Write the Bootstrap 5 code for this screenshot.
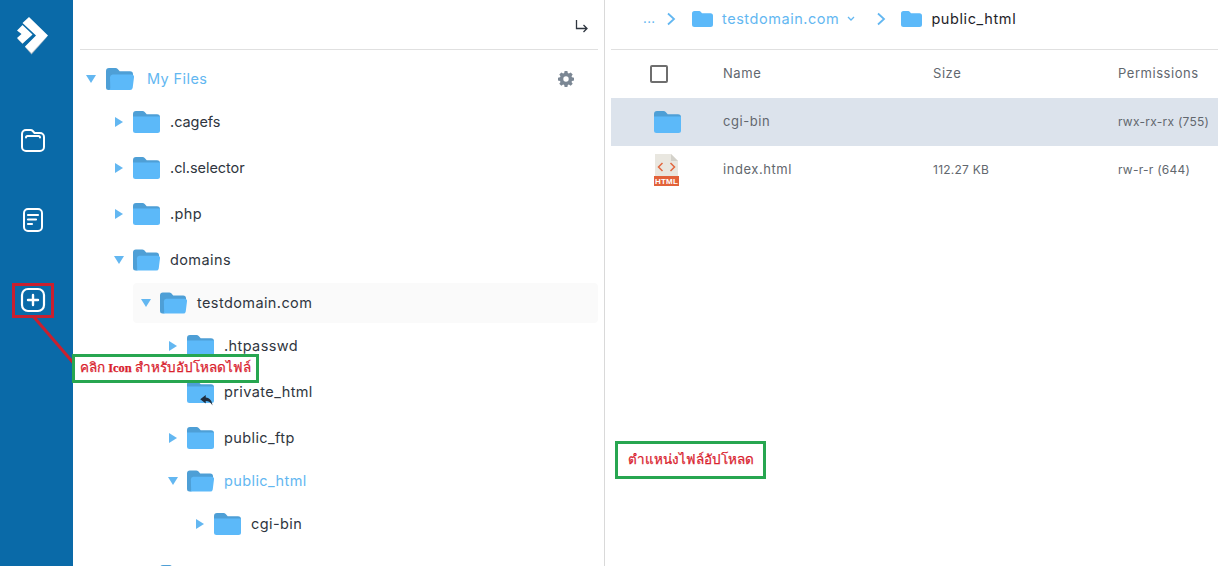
<!DOCTYPE html>
<html lang="th">
<head>
<meta charset="utf-8">
<title>File Manager</title>
<link href="https://cdn.jsdelivr.net/npm/bootstrap@5.3.0/dist/css/bootstrap.min.css" rel="stylesheet">
<style>
html,body{height:100%;overflow:hidden;background:#fff}
body{font-family:"Inter","Liberation Sans",sans-serif;font-size:14.5px;color:#2f3640;letter-spacing:.4px}
.app-shell{height:566px;position:relative;overflow:hidden}
.side-rail{width:73px;flex:none;background:#0a6aa8}
.rail-logo{margin:16px 0 44px 16px;height:40px}
.rail-btn{width:66px;height:80px;display:flex;justify-content:center;align-items:center}
.tree-pane{width:532px;flex:none;border-right:1px solid #d9d9d9;padding:0 6px 0 7px}
.tree-head{height:50px;border-bottom:1px solid #e0e0e0;padding:19px 9px 0 0}
.tree-head svg{margin-right:1px}
.tree-list{list-style:none;margin:0;padding:0 0 0 26px}
.tree-root{padding:0;margin-top:9px}
.tree-sub{padding-left:27px}
.node-row{height:46px;display:flex;align-items:center}
.node-open{height:40px}
.node-current{background:#fafafa;border-radius:4px}
.node-arrow{width:27px;flex:none;display:flex;justify-content:center;padding-right:1px}
.root-arrow{width:26px;padding-right:4px}
.node-icon{width:27px;flex:none;margin-right:10px;position:relative;height:22px}
.root-icon{width:28px;margin-right:13px}
.reply-badge{position:absolute;left:13px;top:14px}
.label-tight{letter-spacing:-.05px}
.node-link{color:#63b7f1}
.gear-wrap{margin-left:auto;margin-right:24px;height:16px;display:block}
.gear-wrap svg{display:block}
.next-row{margin-top:6px}
.files-pane{flex:1;min-width:0;padding-left:6px}
.crumbs{height:50px;border-bottom:1px solid #e0e0e0;padding:0 0 11px 26px;color:#63b7f1}
.crumb-dots{width:29px;padding-left:6px;font-size:13px}
.crumb-sep{width:10px;margin-right:16px}
.crumb-sep-two{margin-left:21px;margin-right:15px}
.crumb-name{margin-left:9px;letter-spacing:.55px}
.crumb-last{color:#1e2228;margin-left:9px;letter-spacing:.6px}
.file-table{width:607px;table-layout:fixed;margin:0;font-size:13px;letter-spacing:.55px}
.file-table th,.file-table td{padding:0;vertical-align:middle;border:0;background:transparent;color:#62676e;font-weight:400;box-shadow:none}
.file-table tr{height:48px}
.col-ic{width:112px}.col-name{width:210px}.col-size{width:185px}
.file-table td:first-child,.file-table th:first-child{padding-left:39px}
.fake-check{display:block;width:18px;height:18px;border:2px solid #6e6e6e;border-radius:2px;margin-bottom:1px}
.file-table .row-selected td{background:#dce3ec}
.file-table td svg{display:block;margin-left:4px}
.file-table .cell-data{font-size:12px;letter-spacing:.25px;white-space:nowrap}
.cell-head{white-space:nowrap}
.note-line{position:absolute;left:0;top:0;pointer-events:none}
.note-red{position:absolute;left:12px;top:283px;width:42px;height:35px;border:3px solid #c9202f}
.note-green{position:absolute;background:#fff;border:3px solid #27a650;color:#d9222e;font-family:"Liberation Serif","Noto Sans",serif;font-weight:400;letter-spacing:0;display:flex;align-items:center;justify-content:center;white-space:nowrap;-webkit-text-stroke:.25px #d9222e}
.note-a{left:72px;top:354px;width:187px;height:29px;font-size:13.5px}
.note-b{left:615px;top:441px;width:151px;height:38px;font-size:13.5px}
.note-en{font-size:12.500px;font-weight:700;margin:0 3px 0 3px}
</style>
</head>
<body>
<svg width="0" height="0" class="position-absolute">
  <defs>
    <symbol id="fold-closed" viewBox="0 0 27 22">
      <path d="M0 3a3 3 0 0 1 3-3h6.500a3 3 0 0 1 2.200 1l2 2.200H24a3 3 0 0 1 3 3V12H0z" fill="#4e9fd6"/>
      <path d="M0 5.500h27V19.500a2.500 2.500 0 0 1-2.500 2.500H2.500A2.500 2.500 0 0 1 0 19.500z" fill="#5cb9f9"/>
    </symbol>
    <symbol id="fold-open" viewBox="0 0 28 22">
      <path d="M0 3a3 3 0 0 1 3-3h6.500a3 3 0 0 1 2.200 1l2 2.200H24a3 3 0 0 1 3 3V12L4 22H2.500A2.500 2.500 0 0 1 0 19.500z" fill="#4e9fd6"/>
      <path d="M6.500 6.500H25.500a2.500 2.500 0 0 1 2.500 2.800l-1.300 10.400a2.700 2.700 0 0 1-2.700 2.300H2.500a2 2 0 0 0 1.800-1.700L4 9.300A3 3 0 0 1 6.500 6.500z" fill="#5cb9f9"/>
    </symbol>
    <symbol id="tri-right" viewBox="0 0 8 10"><path d="M0 0l8 5-8 5z" fill="#63b7f1"/></symbol>
    <symbol id="tri-down" viewBox="0 0 10 8"><path d="M0 0h10L5 8z" fill="#63b7f1"/></symbol>
    <symbol id="crumb-chev" viewBox="0 0 10 14"><path d="M2 1.500l6 5.500-6 5.500" fill="none" stroke="#63b7f1" stroke-width="1.800"/></symbol>
    <symbol id="crumb-fold" viewBox="0 0 21 16"><path d="M0 2.500A2.500 2.500 0 0 1 2.500 0h4.700a2 2 0 0 1 1.500.7l1.300 1.500H18.500A2.500 2.500 0 0 1 21 4.700v8.800a2.500 2.500 0 0 1-2.500 2.500h-16A2.500 2.500 0 0 1 0 13.500z" fill="#5cb9f9"/></symbol>
  </defs>
</svg>

<div class="app-shell d-flex">
  <nav class="side-rail d-flex flex-column">
    <div class="rail-logo">
      <svg width="34" height="40" viewBox="16 16 34 40">
        <path d="M17 38.500l5.500 5.500 7-7.500-1-1-6 5.500z" fill="#7f9db1"/>
        <path d="M25 47l6.500 7.500L48 36l-16.500 15.500-5.500-5.500z" fill="#a9bac6"/>
        <path d="M29 17l19 18.500L31.500 53 25 46.500 36 35.500 22.500 23z" fill="#fff"/>
        <path d="M22.500 25l10 9.500-1.500 1.500-8.500 7.500-5.500-5.500 4.500-4-4.500-3.500z" fill="#fff"/>
      </svg>
    </div>
    <div class="rail-btn">
      <svg width="26" height="26" viewBox="0 0 26 26" fill="none" stroke="#fff" stroke-width="2"><path d="M2 7a4 4 0 0 1 4-4h4.500a3 3 0 0 1 2.300 1l1.700 2H20a4 4 0 0 1 4 4v10a4 4 0 0 1-4 4H6a4 4 0 0 1-4-4z"/><path d="M6 10.500c0-.8.600-1.500 1.500-1.500h11c.9 0 1.500.7 1.500 1.500" stroke-linecap="round"/></svg>
    </div>
    <div class="rail-btn">
      <svg width="22" height="26" viewBox="0 0 22 26" fill="none" stroke="#fff" stroke-width="2" stroke-linecap="round"><rect x="2" y="2" width="18" height="22" rx="4"/><path d="M6 8h10M6 12.500h8M6 17h4" stroke-width="2.200"/></svg>
    </div>
    <div class="rail-btn">
      <svg width="26" height="26" viewBox="0 0 26 26" fill="none" stroke="#fff" stroke-width="2.200" stroke-linecap="round"><rect x="2" y="2" width="22" height="22" rx="6"/><path d="M13 8v10M8 13h10" stroke-width="2.400"/></svg>
    </div>
  </nav>

  <aside class="tree-pane">
    <div class="tree-head d-flex justify-content-end">
      <svg width="13" height="14" viewBox="0 0 13 14" fill="none" stroke="#2f3640" stroke-width="1.300"><path d="M1.500 1v8.500H12M8.500 6l3.500 3.500L8.500 13"/></svg>
    </div>
    <ul class="tree-list tree-root">
      <li>
        <div class="node-row node-open">
          <span class="node-arrow root-arrow"><svg width="10" height="8"><use href="#tri-down"/></svg></span>
          <svg class="node-icon root-icon"><use href="#fold-open"/></svg>
          <span class="node-link">My Files</span>
          <span class="gear-wrap"><svg width="16" height="16" viewBox="0 0 16 16"><path fill="#7b8794" fill-rule="evenodd" d="M6.600 0h2.800l.4 2.100 1.100.5 1.800-1.200 2 2-1.200 1.800.5 1.100 2 .4v2.800l-2 .4-.5 1.100 1.200 1.800-2 2-1.800-1.200-1.100.5-.4 2H6.600l-.4-2-1.100-.5-1.800 1.200-2-2 1.200-1.800-.5-1.100-2-.4V6.700l2-.4.500-1.100L1.300 3.400l2-2 1.800 1.200 1.100-.5zM8 5.300a2.700 2.700 0 1 0 0 5.400 2.700 2.700 0 0 0 0-5.400z"/></svg></span>
        </div>
        <ul class="tree-list">
          <li><div class="node-row"><span class="node-arrow"><svg width="8" height="10"><use href="#tri-right"/></svg></span><svg class="node-icon"><use href="#fold-closed"/></svg><span class="label-tight">.cagefs</span></div></li>
          <li><div class="node-row"><span class="node-arrow"><svg width="8" height="10"><use href="#tri-right"/></svg></span><svg class="node-icon"><use href="#fold-closed"/></svg><span class="label-tight">.cl.selector</span></div></li>
          <li><div class="node-row"><span class="node-arrow"><svg width="8" height="10"><use href="#tri-right"/></svg></span><svg class="node-icon"><use href="#fold-closed"/></svg><span>.php</span></div></li>
          <li>
            <div class="node-row"><span class="node-arrow"><svg width="10" height="8"><use href="#tri-down"/></svg></span><svg class="node-icon"><use href="#fold-open"/></svg><span>domains</span></div>
            <ul class="tree-list tree-sub">
              <li>
                <div class="node-row node-open node-current"><span class="node-arrow"><svg width="10" height="8"><use href="#tri-down"/></svg></span><svg class="node-icon"><use href="#fold-open"/></svg><span>testdomain.com</span></div>
                <ul class="tree-list tree-sub">
                  <li><div class="node-row"><span class="node-arrow"><svg width="8" height="10"><use href="#tri-right"/></svg></span><svg class="node-icon"><use href="#fold-closed"/></svg><span>.htpasswd</span></div></li>
                  <li><div class="node-row"><span class="node-arrow"></span><span class="node-icon"><svg width="27" height="22" class="d-block"><use href="#fold-closed"/></svg><svg class="reply-badge" width="14" height="11" viewBox="0 0 16 13"><path d="M6.500 0L0 5l6.500 5V7c3.500 0 6 1.500 8 5.500C14 7 11.500 3.500 6.500 3z" fill="#1f2d3d"/></svg></span><span>private_html</span></div></li>
                  <li><div class="node-row"><span class="node-arrow"><svg width="8" height="10"><use href="#tri-right"/></svg></span><svg class="node-icon"><use href="#fold-closed"/></svg><span>public_ftp</span></div></li>
                  <li>
                    <div class="node-row node-open"><span class="node-arrow"><svg width="10" height="8"><use href="#tri-down"/></svg></span><svg class="node-icon"><use href="#fold-open"/></svg><span class="node-link">public_html</span></div>
                    <ul class="tree-list tree-sub">
                      <li><div class="node-row"><span class="node-arrow"><svg width="8" height="10"><use href="#tri-right"/></svg></span><svg class="node-icon"><use href="#fold-closed"/></svg><span>cgi-bin</span></div></li>
                    </ul>
                  </li>
                </ul>
              </li>
              <li><div class="node-row next-row"><span class="node-arrow"></span><svg class="node-icon"><use href="#fold-closed"/></svg></div></li>
            </ul>
          </li>
        </ul>
      </li>
    </ul>
  </aside>

  <main class="files-pane">
    <div class="crumbs d-flex align-items-center">
      <span class="crumb-dots">...</span>
      <svg class="crumb-sep" height="14"><use href="#crumb-chev"/></svg>
      <svg width="21" height="16"><use href="#crumb-fold"/></svg>
      <span class="crumb-name">testdomain.com</span>
      <svg class="ms-2" width="8" height="6" viewBox="0 0 8 6" fill="none" stroke="#63b7f1" stroke-width="1.300"><path d="M1 1l3 3 3-3"/></svg>
      <svg class="crumb-sep crumb-sep-two" height="14"><use href="#crumb-chev"/></svg>
      <svg width="21" height="16"><use href="#crumb-fold"/></svg>
      <span class="crumb-last">public_html</span>
    </div>
    <table class="table file-table">
      <colgroup><col class="col-ic"><col class="col-name"><col class="col-size"><col></colgroup>
      <thead>
        <tr><th><span class="fake-check"></span></th><th>Name</th><th>Size</th><th class="cell-head">Permissions</th></tr>
      </thead>
      <tbody>
        <tr class="row-selected">
          <td><svg width="27" height="22"><use href="#fold-closed"/></svg></td>
          <td>cgi-bin</td><td></td><td class="cell-data">rwx-rx-rx (755)</td>
        </tr>
        <tr>
          <td>
            <svg width="25" height="32" viewBox="0 0 25 32">
              <path d="M1 0h16l7 7v20H1z" fill="#e9e7e0"/>
              <path d="M17 0l7 7h-7z" fill="#d3d1ca"/>
              <path d="M8.500 9l-4 4 4 4M16.500 9l4 4-4 4" fill="none" stroke="#e2673f" stroke-width="1.500"/>
              <rect x="0" y="22" width="25" height="10" fill="#e2623a"/>
              <text x="12.500" y="30" text-anchor="middle" fill="#fff" font-family="Liberation Sans, sans-serif" font-size="8" font-weight="700" letter-spacing=".2">HTML</text>
            </svg>
          </td>
          <td>index.html</td><td class="cell-data">112.27 KB</td><td class="cell-data">rw-r-r (644)</td>
        </tr>
      </tbody>
    </table>
  </main>

  <svg class="note-line" width="90" height="380"><path d="M33 316L76 366" stroke="#c9202f" stroke-width="3"/></svg>
  <div class="note-red"></div>
  <div class="note-green note-a">คลิก<span class="note-en">Icon</span>สำหรับอัปโหลดไฟล์</div>
  <div class="note-green note-b">ตำแหน่งไฟล์อัปโหลด</div>
</div>
<script src="https://cdn.jsdelivr.net/npm/bootstrap@5.3.0/dist/js/bootstrap.bundle.min.js"></script>
</body>
</html>
